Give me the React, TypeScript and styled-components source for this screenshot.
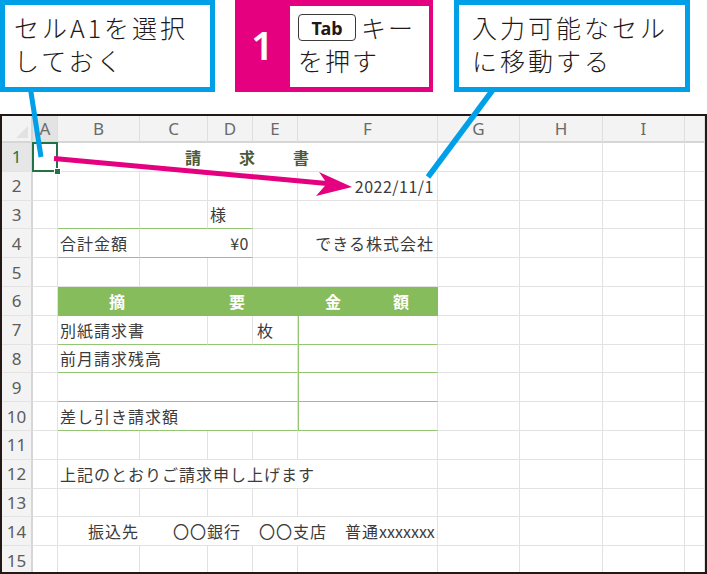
import React from "react";
import styled, { createGlobalStyle } from "styled-components";

const BLUE = "#00a0e9";
const PINK = "#e4007f";
const INK = "#231815";
const GREEN_FILL = "#86bc5c";
const GREEN_LINE = "#94c573";
const GRID = "#e2e2e2";
const SEL = "#217346";

const Global = createGlobalStyle`
  html, body { margin: 0; padding: 0; background: #fff; }
  body { font-family: "Noto Sans CJK JP", "Noto Sans", sans-serif; color: ${INK}; }
`;

const Page = styled.div`
  position: relative;
  width: 707px; height: 574px;
  overflow: hidden; background: #fff;
`;

const Callouts = styled.div`
  display: flex; height: 92px;
`;

const Note = styled.div<{ $w: number; $ml: number; $pl: number }>`
  box-sizing: border-box;
  width: ${({ $w }) => $w}px; height: 92px;
  margin-left: ${({ $ml }) => $ml}px;
  border: 5px solid ${BLUE};
  padding: 6px 0 0 ${({ $pl }) => $pl}px;
  font-size: 25px; font-weight: 300; line-height: 33px; letter-spacing: 3px;
  white-space: nowrap; color: ${INK};
`;

const Step = styled.div`
  box-sizing: border-box;
  display: flex;
  width: 198px; height: 92px; margin-left: 20px;
  background: ${PINK};
  padding: 6px 4px 5px 0;
`;

const StepNum = styled.div`
  width: 55px;
  display: flex; align-items: center; justify-content: center;
  color: #fff; font: 600 40px "Noto Sans", sans-serif;
  padding-bottom: 4px;
`;

const StepBody = styled.div`
  flex: 1; background: #fff;
  padding: 5px 0 0 8px;
  font-size: 25px; font-weight: 300; line-height: 33px; letter-spacing: 2px;
  white-space: nowrap; color: ${INK};
`;

const StepLine = styled.div`
  display: flex; align-items: center; height: 33px;
`;

const Key = styled.span`
  box-sizing: border-box;
  display: inline-flex; align-items: center; justify-content: center;
  width: 58px; height: 27px; margin-right: 5px;
  border: 1.5px solid #3a3a3a; border-radius: 4px;
  font: 700 18px "Noto Sans", sans-serif; letter-spacing: 0;
`;

const Sheet = styled.div`
  box-sizing: border-box;
  margin-top: 22px;
  width: 707px; height: 460px;
  border: 2px solid ${INK};
  overflow: hidden;
  display: grid;
  grid-template-columns: 31px 25px 82px 68px 45px 45px 140px 82px 83px 82px 1fr;
  grid-template-rows: 27px;
  grid-auto-rows: 28.8px;
`;

const Corner = styled.div`
  position: relative; box-sizing: border-box;
  background: #f3f3f3;
  border-right: 2px solid #d6d6d6; border-bottom: 2px solid #d6d6d6;
  &::after {
    content: ""; position: absolute; right: 3px; bottom: 3px;
    border-left: 12px solid transparent; border-bottom: 12px solid #e2e2e2;
  }
`;

const ColHead = styled.div<{ $sel?: boolean }>`
  box-sizing: border-box;
  display: flex; align-items: center; justify-content: center;
  background: ${({ $sel }) => ($sel ? "#e3e3e3" : "#f3f3f3")};
  border-right: 1px solid #dedede; border-bottom: 2px solid #d6d6d6;
  font: 400 17px "Noto Sans", sans-serif; color: #6a6a6a;
`;

const RowHead = styled.div<{ $sel?: boolean }>`
  box-sizing: border-box;
  display: flex; align-items: center; justify-content: center;
  background: ${({ $sel }) => ($sel ? "#e6e6e6" : "#f3f3f3")};
  border-right: 2px solid #d6d6d6; border-bottom: 1px solid #e3e3e3;
  font: 400 17px "Noto Sans", sans-serif;
  color: ${({ $sel }) => ($sel ? SEL : "#5c5c5c")};
`;

type Align = "left" | "right" | "center";

const Cell = styled.div<{ $span: number; $align: Align; $gb?: boolean; $gl?: boolean; $head?: boolean; $sel?: boolean }>`
  position: relative; box-sizing: border-box;
  grid-column: span ${({ $span }) => $span};
  display: flex; align-items: center;
  justify-content: ${({ $align }) => ($align === "right" ? "flex-end" : $align === "center" ? "center" : "flex-start")};
  padding: 0 3px 0 2px;
  background: ${({ $head }) => ($head ? GREEN_FILL : "transparent")};
  border-right: 1px solid ${({ $head }) => ($head ? GREEN_FILL : GRID)};
  border-bottom: 1px solid ${({ $gb, $head }) => ($head ? GREEN_FILL : $gb ? GREEN_LINE : GRID)};
  box-shadow: ${({ $gl }) => ($gl ? `inset 1px 0 0 ${GREEN_LINE}` : "none")};
  font-size: 16px; letter-spacing: 1px; color: #3b3b3b;
  white-space: nowrap;
  ${({ $sel }) =>
    $sel &&
    `
    &::after {
      content: ""; position: absolute; left: -1px; top: -1px; right: -1px; bottom: -1px;
      border: 2px solid ${SEL};
    }
    &::before {
      content: ""; position: absolute; right: -4px; bottom: -4px; z-index: 1;
      width: 5px; height: 5px; background: ${SEL}; border: 1px solid #fff;
    }
  `}
`;

const Spread = styled.span<{ $gap: number; $color: string }>`
  display: flex; gap: ${({ $gap }) => $gap}px;
  font-weight: 700; letter-spacing: 0;
  color: ${({ $color }) => $color};
`;

const Latin = styled.span`
  letter-spacing: 0.5px;
`;

const Piece = styled.span<{ $ml: number }>`
  margin-left: ${({ $ml }) => $ml}px;
`;

const Overlay = styled.svg`
  position: absolute; left: 0; top: 0;
  pointer-events: none;
`;

type Def = { c: number; span?: number; node?: React.ReactNode; align?: Align; gb?: boolean; gl?: boolean; head?: boolean };

const COLS = ["A", "B", "C", "D", "E", "F", "G", "H", "I", ""];

const ROWS: Record<number, Def[]> = {
  1: [{ c: 1, span: 5, align: "center", node: <Spread $gap={38} $color="#4a5a3c"><span>請</span><span>求</span><span>書</span></Spread> }],
  2: [{ c: 5, align: "right", node: <Latin>2022/11/1</Latin> }],
  3: [{ c: 1, gb: true }, { c: 2, gb: true }, { c: 3, gb: true, node: "様" }],
  4: [
    { c: 1, gb: true, node: "合計金額" },
    { c: 2, span: 2, gb: true, align: "right", node: <Latin>¥0</Latin> },
    { c: 5, align: "right", node: "できる株式会社" },
  ],
  6: [
    { c: 1, span: 4, head: true, align: "center", node: <Spread $gap={104} $color="#fff"><span>摘</span><span>要</span></Spread> },
    { c: 5, head: true, align: "center", node: <Spread $gap={52} $color="#fff"><span>金</span><span>額</span></Spread> },
  ],
  7: [
    { c: 1, span: 2, gb: true, node: "別紙請求書" },
    { c: 3, gb: true },
    { c: 4, gb: true, node: <Piece $ml={2}>枚</Piece> },
    { c: 5, gb: true, gl: true },
  ],
  8: [{ c: 1, span: 4, gb: true, node: "前月請求残高" }, { c: 5, gb: true, gl: true }],
  9: [{ c: 1, span: 4, gb: true }, { c: 5, gb: true, gl: true }],
  10: [{ c: 1, span: 4, gb: true, node: "差し引き請求額" }, { c: 5, gb: true, gl: true }],
  12: [{ c: 1, span: 5, node: "上記のとおりご請求申し上げます" }],
  14: [
    {
      c: 1,
      span: 5,
      node: (
        <>
          <Piece $ml={28}>振込先</Piece>
          <Piece $ml={34}>〇〇銀行</Piece>
          <Piece $ml={18}>〇〇支店</Piece>
          <Piece $ml={18}>普通<Latin style={{ letterSpacing: 0 }}>xxxxxxx</Latin></Piece>
        </>
      ),
    },
  ],
};

function BodyRow({ r }: { r: number }) {
  const defs = ROWS[r] ?? [];
  const cells: React.ReactNode[] = [];
  let c = 0;
  while (c < COLS.length) {
    const d = defs.find((x) => x.c === c);
    const span = d?.span ?? 1;
    cells.push(
      <Cell
        key={c}
        $span={span}
        $align={d?.align ?? "left"}
        $gb={d?.gb}
        $gl={d?.gl}
        $head={d?.head}
        $sel={r === 1 && c === 0}
      >
        {d?.node}
      </Cell>
    );
    c += span;
  }
  return (
    <>
      <RowHead $sel={r === 1}>{r}</RowHead>
      {cells}
    </>
  );
}

export default function App() {
  const rows = Array.from({ length: 15 }, (_, i) => i + 1);
  return (
    <Page>
      <Global />
      <Callouts>
        <Note $w={215} $ml={0} $pl={9}>
          セルA1を選択
          <br />
          しておく
        </Note>
        <Step>
          <StepNum>1</StepNum>
          <StepBody>
            <StepLine>
              <Key>Tab</Key>キー
            </StepLine>
            <StepLine>を押す</StepLine>
          </StepBody>
        </Step>
        <Note $w={236} $ml={21} $pl={13}>
          入力可能なセル
          <br />
          に移動する
        </Note>
      </Callouts>

      <Sheet>
        <Corner />
        {COLS.map((l, i) => (
          <ColHead key={i} $sel={i === 0}>{l}</ColHead>
        ))}
        {rows.map((r) => (
          <BodyRow key={r} r={r} />
        ))}
      </Sheet>

      <Overlay width={707} height={574} viewBox="0 0 707 574">
        <line x1={30.5} y1={89} x2={41} y2={157} stroke={BLUE} strokeWidth={5} />
        <line x1={493.5} y1={89} x2={428} y2={177} stroke={BLUE} strokeWidth={5.5} />
        <line x1={54} y1={158.5} x2={327} y2={183.5} stroke={PINK} strokeWidth={5} />
        <polygon points="352,187 319,172 327,183.5 316,196" fill={PINK} />
      </Overlay>
    </Page>
  );
}
